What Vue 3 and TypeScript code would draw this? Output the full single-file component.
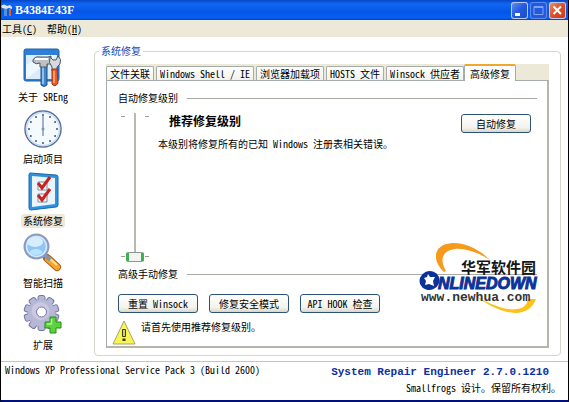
<script setup lang="ts">
import { ref } from 'vue'

type IconName = 'about' | 'clock' | 'checks' | 'search' | 'gear'

const navItems: { label: string; icon: IconName }[] = [
  { label: '关于 SREng', icon: 'about' },
  { label: '启动项目', icon: 'clock' },
  { label: '系统修复', icon: 'checks' },
  { label: '智能扫描', icon: 'search' },
  { label: '扩展', icon: 'gear' },
]
const tabs: string[] = ['文件关联', 'Windows Shell / IE', '浏览器加载项', 'HOSTS 文件', 'Winsock 供应者', '高级修复']
const manualActions: string[] = ['重置 Winsock', '修复安全模式', 'API HOOK 检查']

const activeNav = ref('系统修复')
const activeTab = ref('高级修复')
const level = ref(0)

const clockMarks = Array.from({ length: 12 }, (_, i) => {
  const a = (i * Math.PI) / 6
  return { x: 20 + 14 * Math.sin(a), y: 20 - 14 * Math.cos(a) }
})
const teeth = Array.from({ length: 10 }, (_, i) => i * 36)
</script>

<template>
  <div class="window">
    <header class="titlebar">
      <svg class="app-icon" width="12" height="14" viewBox="0 0 12 14" aria-hidden="true">
        <path d="M0 3Q3 0 6 3L9 2L11 4V6L8 5L5 6L1 5Z" fill="#dfe5ea" />
        <path d="M3 6H6V13H3Z" fill="#4b93da" />
        <path d="M8 6H10V13H8Z" fill="#ee5a28" />
      </svg>
      <h1>B4384E43F</h1>
      <div class="controls">
        <button type="button" aria-label="最小化">
          <svg width="17" height="17" viewBox="0 0 17 17"><path d="M4 12.500H9" stroke="#fff" stroke-width="3" /></svg>
        </button>
        <button type="button" class="dim" aria-label="最大化" disabled>
          <svg width="17" height="17" viewBox="0 0 17 17"><path d="M4 4.500H13V12.500H4ZM4 5.500H13" fill="none" stroke="#7ea2f4" /></svg>
        </button>
        <button type="button" class="close" aria-label="关闭">
          <svg width="17" height="17" viewBox="0 0 17 17"><path d="M4.500 4.500L12 12M12 4.500L4.500 12" stroke="#fff" stroke-width="2" /></svg>
        </button>
      </div>
    </header>

    <nav class="menubar">
      <button type="button">工具(<u>C</u>)</button>
      <button type="button">帮助(<u>H</u>)</button>
    </nav>

    <div class="body">
      <aside class="sidebar">
        <button
          v-for="item in navItems"
          :key="item.label"
          type="button"
          class="nav-item"
          :class="{ selected: item.label === activeNav }"
          @click="activeNav = item.label"
        >
          <svg class="nav-icon" width="40" height="40" viewBox="0 0 40 40" aria-hidden="true">
            <template v-if="item.icon === 'about'">
              <rect x="1" y="2" width="35" height="32" rx="2" fill="#2f7fd8" stroke="#2360ac" />
              <rect x="3" y="8" width="31" height="24" fill="#d8ecfc" />
              <path d="M3 32V18L20 8H34Z" fill="#eef8ff" />
              <path d="M18 17H24V38Q21 41 18 38Z" fill="#4288c9" stroke="#204e82" />
              <path d="M20 20V37" stroke="#a7d3f5" stroke-width="1.500" />
              <path d="M10 13Q12 9 17 10H25L28 9V17H24V20H17V16Q13 18 10 15Z" fill="#bcc1c6" stroke="#4e555b" />
              <path d="M12 12H25" stroke="#fff" stroke-width="2" />
              <path d="M27 10L30 13L33 13L35 9Q39 12 37 17L34 20V24H29V20Q25 16 27 10Z" fill="#d5dade" stroke="#4e555b" />
              <path d="M29 22H34L35 36Q32 41 29 37Z" fill="#ee5a23" stroke="#a42f12" />
              <path d="M31 24V36" stroke="#ffb28b" stroke-width="1.500" />
            </template>
            <template v-else-if="item.icon === 'clock'">
              <circle cx="20" cy="20" r="18" fill="#f5fafe" stroke="#57719f" stroke-width="1.500" />
              <circle cx="20" cy="20" r="16.500" fill="none" stroke="#cadcf0" stroke-width="1.500" />
              <circle v-for="(m, i) in clockMarks" :key="i" :cx="m.x" :cy="m.y" r="1" fill="#3b5686" />
              <path d="M20 7V27" stroke="#50698e" />
              <circle cx="20" cy="20" r="1.500" fill="#7994b8" />
            </template>
            <template v-else-if="item.icon === 'checks'">
              <path d="M7 2L33 4Q35 4 35 6V34Q35 36 33 36L8 39Q6 39 6 37V4Q6 2 7 2Z" fill="#2f93df" stroke="#1668b0" />
              <path d="M9 5L32 7V33L9 36Z" fill="#e9f4fc" />
              <path d="M15 11H24V19H15ZM15 23H24V31H15Z" fill="#fff" stroke="#7f8b94" />
              <path d="M15 12L19 17L27 6M15 24L19 29L27 18" fill="none" stroke="#c92020" stroke-width="3" />
            </template>
            <template v-else-if="item.icon === 'search'">
              <path d="M24 25L34 34" stroke="#a95f13" stroke-width="8" stroke-linecap="round" />
              <path d="M25 26L34 34" stroke="#f5a52b" stroke-width="6" stroke-linecap="round" />
              <path d="M26 25L34 32" stroke="#ffe08f" stroke-width="2" />
              <path d="M22 22L27 27" stroke="#8b939f" stroke-width="4" />
              <circle cx="13.500" cy="13.500" r="12" fill="#79b7f1" stroke="#8d9bbb" stroke-width="2" />
              <circle cx="13.500" cy="13.500" r="10" fill="#8fc6f7" stroke="#d9e8fa" stroke-width="1.500" />
              <ellipse cx="12" cy="9" rx="8" ry="5" fill="#d6edff" />
              <ellipse cx="13" cy="19" rx="6" ry="3" fill="#b8e4ff" />
            </template>
            <template v-else>
              <g fill="#b7b7d6" stroke="#7676a2" stroke-width="1">
                <rect v-for="a in teeth" :key="a" x="15" y="0.500" width="7" height="9" rx="2" :transform="`rotate(${a} 18.500 18)`" />
              </g>
              <circle cx="18.500" cy="18" r="13.500" fill="#b7b7d6" />
              <circle cx="17.500" cy="16" r="9" fill="#c9c9e2" />
              <circle cx="18.500" cy="17" r="5" fill="#fff" stroke="#7676a2" />
              <path d="M27 22H33V27H38V33H33V38H27V33H22V27H27Z" fill="#5bd33c" stroke="#278b1a" />
              <path d="M28.500 24V29H24" fill="none" stroke="#b2f398" stroke-width="1.500" />
            </template>
          </svg>
          <span class="nav-label">{{ item.label }}</span>
        </button>
      </aside>

      <fieldset class="group">
        <legend>系统修复</legend>
        <div class="tab-strip" role="tablist">
          <button
            v-for="tab in tabs"
            :key="tab"
            type="button"
            role="tab"
            class="tab"
            :class="{ active: tab === activeTab }"
            :aria-selected="tab === activeTab"
            @click="activeTab = tab"
          >{{ tab }}</button>
        </div>
        <section class="panel" role="tabpanel">
          <h2 class="rule"><label for="level">自动修复级别</label></h2>
          <div class="auto">
            <div class="slider">
              <span class="ticks"></span>
              <input id="level" v-model.number="level" type="range" min="0" max="1" step="1" />
              <span class="ticks"></span>
            </div>
            <div class="level-text">
              <h3>推荐修复级别</h3>
              <p>本级别将修复所有的已知 Windows 注册表相关错误。</p>
            </div>
            <button type="button" class="xp-button auto-button">自动修复</button>
          </div>
          <h2 class="rule">高级手动修复</h2>
          <div class="actions">
            <button v-for="a in manualActions" :key="a" type="button" class="xp-button">{{ a }}</button>
          </div>
          <div class="notice">
            <svg width="24" height="25" viewBox="0 0 24 25" aria-hidden="true">
              <path d="M12 1L23 24H1Z" fill="#f8f455" stroke="#a5a36b" stroke-linejoin="round" />
              <path d="M10.500 9.500H13.500V16.500H10.500Z" fill="#d8d250" stroke="#3c3a12" />
              <path d="M10.500 18.500H13.500V21H10.500Z" fill="#3c3a12" />
            </svg>
            <p>请首先使用推荐修复级别。</p>
          </div>
          <svg class="watermark" width="120" height="72" viewBox="0 0 120 72">
            <path d="M25 29C13 18 13 1 34 0C49 0 62 8 71 17C60 10 46 5 36 6C22 8 21 18 27 28Z" fill="#f79a1c" />
            <path d="M55 52C72 62 88 68 98 66C106 65 108 61 109 56L117 56C114 64 108 69 98 70C84 70 70 63 55 52Z" fill="#fbc21c" />
            <text x="42" y="30" class="wm-cn">华军软件园</text>
            <ellipse cx="10.500" cy="37.500" rx="7.500" ry="7" transform="rotate(-25 10.500 37.500)" fill="#0c3299" stroke="#0c3299" stroke-width="5" />
            <path d="M9 31L11 34L16 34L14 38L15 43L10 41L6 42L7 38L5 35L8 34Z" fill="#fff" />
            <text x="19" y="46" class="wm-en">NLINEDOWN</text>
            <text x="2" y="58" class="wm-url">www.newhua.com</text>
          </svg>
        </section>
      </fieldset>
    </div>

    <footer class="footer">
      <p>Windows XP Professional Service Pack 3 (Build 2600)</p>
      <div class="credit">
        <strong>System Repair Engineer 2.7.0.1210</strong>
        <p>Smallfrogs 设计。保留所有权利。</p>
      </div>
    </footer>
  </div>
</template>

<style>
body {
  margin: 0;
  background: #fff;
}
</style>

<style scoped>
* {
  box-sizing: border-box;
}
.window {
  display: flex;
  flex-direction: column;
  min-height: 100vh;
  border: 1px solid #000;
  border-top: 0;
  border-bottom: 2px solid #00107c;
  background: #fff;
  color: #000;
  font-family: "Noto Sans CJK SC", sans-serif;
  font-size: 10px;
  line-height: 14px;
  font-feature-settings: "hwid";
}
h1, h2, h3, p {
  margin: 0;
  font-size: inherit;
  font-weight: normal;
}
button {
  margin: 0;
  padding: 0;
  border: 0;
  background: none;
  color: inherit;
  font: inherit;
  font-feature-settings: inherit;
  white-space: nowrap;
}
svg {
  display: block;
}
.titlebar {
  display: flex;
  align-items: center;
  gap: 2px;
  height: 20px;
  padding-right: 2px;
  background: linear-gradient(#0747c8, #1266f4 20%, #0555e6 60%, #0660f5 90%, #0340b8);
}
.titlebar h1 {
  flex: 1;
  color: #fff;
  font-family: "Liberation Serif", serif;
  font-size: 12px;
  font-weight: bold;
}
.controls {
  display: flex;
  gap: 2px;
}
.controls button {
  width: 17px;
  height: 17px;
  border-radius: 3px;
  background: linear-gradient(135deg, #6b94f5, #2458dd 50%, #194bd0);
  box-shadow: inset 0 0 0 1px #b9cdf8;
}
.controls .dim {
  background: #2159df;
  box-shadow: inset 0 0 0 1px #5f88eb;
}
.controls .close {
  background: linear-gradient(135deg, #ef9577, #df4d25 50%, #c53a14);
}
.menubar {
  display: flex;
  gap: 10px;
  height: 17px;
  padding: 0 1px;
  background: #ece9d8;
}
u {
  text-underline-offset: 1px;
}
.body {
  display: flex;
  flex: 1;
  padding-right: 7px;
}
.sidebar {
  flex: 0 0 93px;
  display: flex;
  flex-direction: column;
  padding: 10px 9px 0 0;
}
.nav-item {
  display: flex;
  flex-direction: column;
  align-items: center;
  height: 62px;
}
.nav-label {
  margin-top: 3px;
  padding: 0 2px;
  border-radius: 3px;
}
.selected .nav-label {
  background: #ece9d8;
}
.group {
  flex: 1;
  display: flex;
  flex-direction: column;
  min-width: 0;
  margin: 7px 0 5px;
  padding: 6px 11px 7px;
  border: 1px solid #d5d5c8;
  border-radius: 4px;
}
.group legend {
  margin-left: -7px;
  padding: 0 2px;
  color: #1749b8;
}
.tab-strip {
  display: flex;
  align-items: flex-end;
  gap: 2px;
  height: 16px;
  background: #ece9d8;
}
.tab {
  height: 14px;
  padding: 0 3px;
  border: 1px solid #a5aca9;
  border-bottom: 0;
  border-radius: 2px 2px 0 0;
  background: linear-gradient(#fff, #f2f1ea);
  line-height: 13px;
}
.tab.active {
  z-index: 1;
  height: 17px;
  margin: 0 0 -1px -2px;
  padding: 0 5px;
  border-top: 2px solid #f0a72c;
  background: #fff;
  line-height: 12px;
}
.panel {
  position: relative;
  flex: 1;
  padding: 10px 10px 1px 11px;
  border: 1px solid #a5aca9;
  border-right: 2px solid #b5b5ac;
  border-bottom: 2px solid #b5b5ac;
}
.rule {
  display: flex;
  align-items: center;
  gap: 9px;
}
.rule::after {
  content: "";
  flex: 1;
  border-top: 1px solid #aaaaa4;
}
.auto {
  display: flex;
  align-items: flex-start;
  height: 162px;
  padding: 7px 6px 0 3px;
}
.slider {
  display: flex;
  height: 150px;
}
.ticks {
  width: 4px;
  margin: 4px 0 5px;
  border: solid #9b9b92;
  border-width: 1px 0;
}
#level {
  appearance: none;
  writing-mode: vertical-lr;
  direction: rtl;
  width: 20px;
  height: 150px;
  margin: 0;
  background: linear-gradient(#b9b9b2, #b9b9b2) center / 2px 148px no-repeat;
}
#level::-webkit-slider-thumb {
  appearance: none;
  width: 18px;
  height: 10px;
  border: 1px solid #8b9a90;
  border-left: 3px solid #3fae55;
  border-right: 3px solid #3fae55;
  border-radius: 2px;
  background: #f3f3ef;
}
.level-text {
  flex: 1;
  padding: 2px 0 0 9px;
}
.level-text h3 {
  margin-left: 11px;
  font-size: 12px;
  font-weight: bold;
}
.level-text p {
  margin-top: 9px;
}
.xp-button {
  width: 80px;
  height: 19px;
  border: 1px solid #2d5377;
  border-radius: 3px;
  background: linear-gradient(#fff, #f3f2ec 75%, #d9d5c9);
}
.auto-button {
  flex: none;
  width: 70px;
  margin-top: 2px;
}
.actions {
  display: flex;
  gap: 11px;
  margin-top: 13px;
}
.notice {
  display: flex;
  gap: 5px;
  margin: 7px 0 0 -6px;
}
.watermark {
  position: absolute;
  right: 8px;
  bottom: 31px;
}
.wm-cn {
  font: bold 15px "Noto Sans CJK SC", sans-serif;
  fill: #161616;
}
.wm-en {
  font: italic bold 16px "Liberation Sans", sans-serif;
  fill: #0c3299;
  stroke: #0c3299;
}
.wm-url {
  font: bold 13px "Liberation Mono", monospace;
  fill: #333;
}
.footer {
  display: flex;
  justify-content: space-between;
  height: 39px;
  padding: 1px 7px 0 4px;
  border-top: 1px solid #c5c5ba;
}
.credit {
  display: flex;
  flex-direction: column;
  gap: 2px;
  padding-top: 2px;
  text-align: right;
}
.credit strong {
  margin-right: 12px;
  color: #0d2fa0;
  font-family: "Liberation Mono", monospace;
  font-size: 11px;
}
</style>
